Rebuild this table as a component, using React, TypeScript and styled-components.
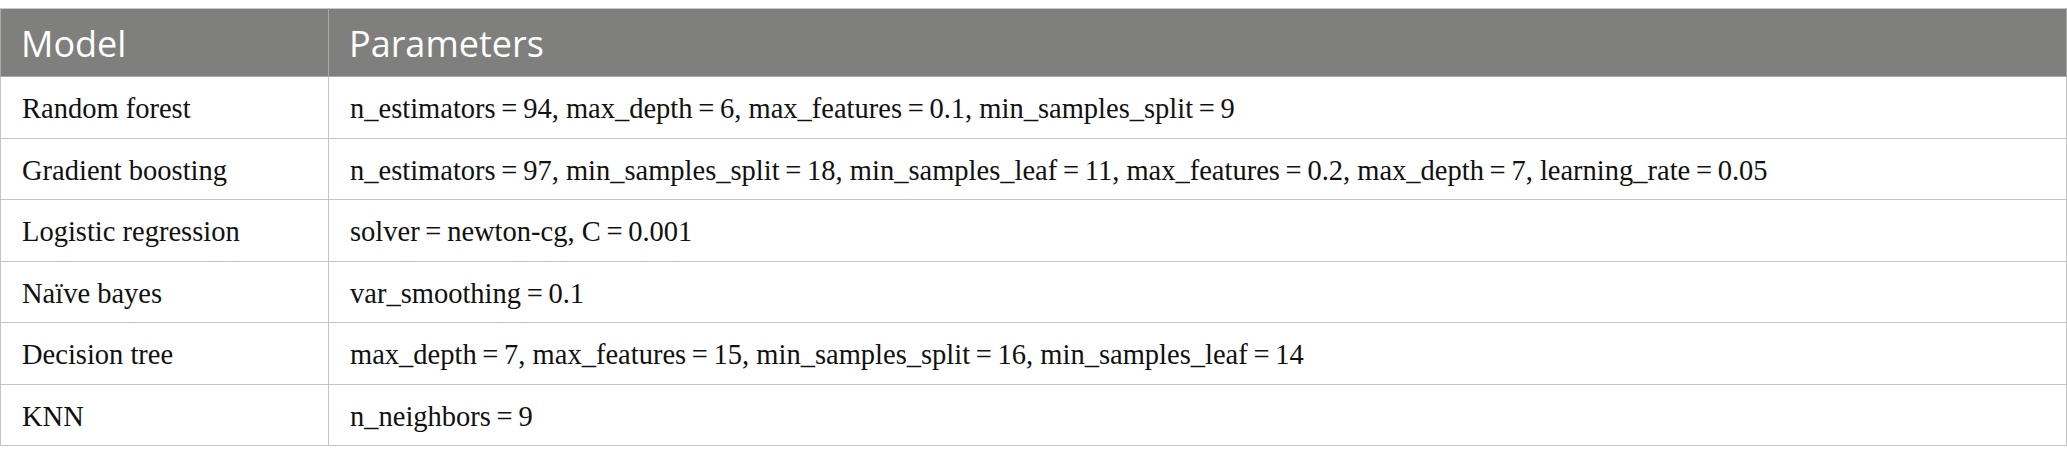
import React from "react";
import styled, { createGlobalStyle } from "styled-components";

const Global = createGlobalStyle`
  html, body { margin: 0; padding: 0; background: #ffffff; }
  body { padding-top: 8px; }
`;

const Table = styled.table`
  width: 2067px;
  border-collapse: collapse;
  table-layout: fixed;
`;

const HeadCell = styled.th<{ $w?: number }>`
  width: ${(p) => (p.$w ? `${p.$w}px` : "auto")};
  height: 68px;
  box-sizing: border-box;
  background: #7f807e;
  color: #ffffff;
  font-family: "Open Sans", "Noto Sans", sans-serif;
  font-weight: 400;
  font-size: 36px;
  line-height: 1;
  text-align: left;
  padding: 3px 0 0 20px;
  border: 1px solid #a9aaa8;
  border-top: 1px solid #c8c8c8;
`;

const Row = styled.tr`
  height: 61.5px;
`;

const Cell = styled.td`
  box-sizing: border-box;
  font-family: "Liberation Serif", "Times New Roman", serif;
  font-size: 28.5px;
  color: #111111;
  padding: 4px 0 0 21px;
  border: 1px solid #c4c4c4;
  white-space: nowrap;
`;

const rows: [string, string][] = [
  ["Random forest", "n_estimators = 94, max_depth = 6, max_features = 0.1, min_samples_split = 9"],
  [
    "Gradient boosting",
    "n_estimators = 97, min_samples_split = 18, min_samples_leaf = 11, max_features = 0.2, max_depth = 7, learning_rate = 0.05",
  ],
  ["Logistic regression", "solver = newton-cg, C = 0.001"],
  ["Naïve bayes", "var_smoothing = 0.1"],
  ["Decision tree", "max_depth = 7, max_features = 15, min_samples_split = 16, min_samples_leaf = 14"],
  ["KNN", "n_neighbors = 9"],
];

const fmt = (s: string) => s.replace(/ = /g, "\u2009=\u2009");

export default function App() {
  return (
    <>
      <Global />
      <Table>
        <thead>
          <tr>
            <HeadCell $w={328}>Model</HeadCell>
            <HeadCell>Parameters</HeadCell>
          </tr>
        </thead>
        <tbody>
          {rows.map(([m, p]) => (
            <Row key={m}>
              <Cell>{m}</Cell>
              <Cell>{fmt(p)}</Cell>
            </Row>
          ))}
        </tbody>
      </Table>
    </>
  );
}
